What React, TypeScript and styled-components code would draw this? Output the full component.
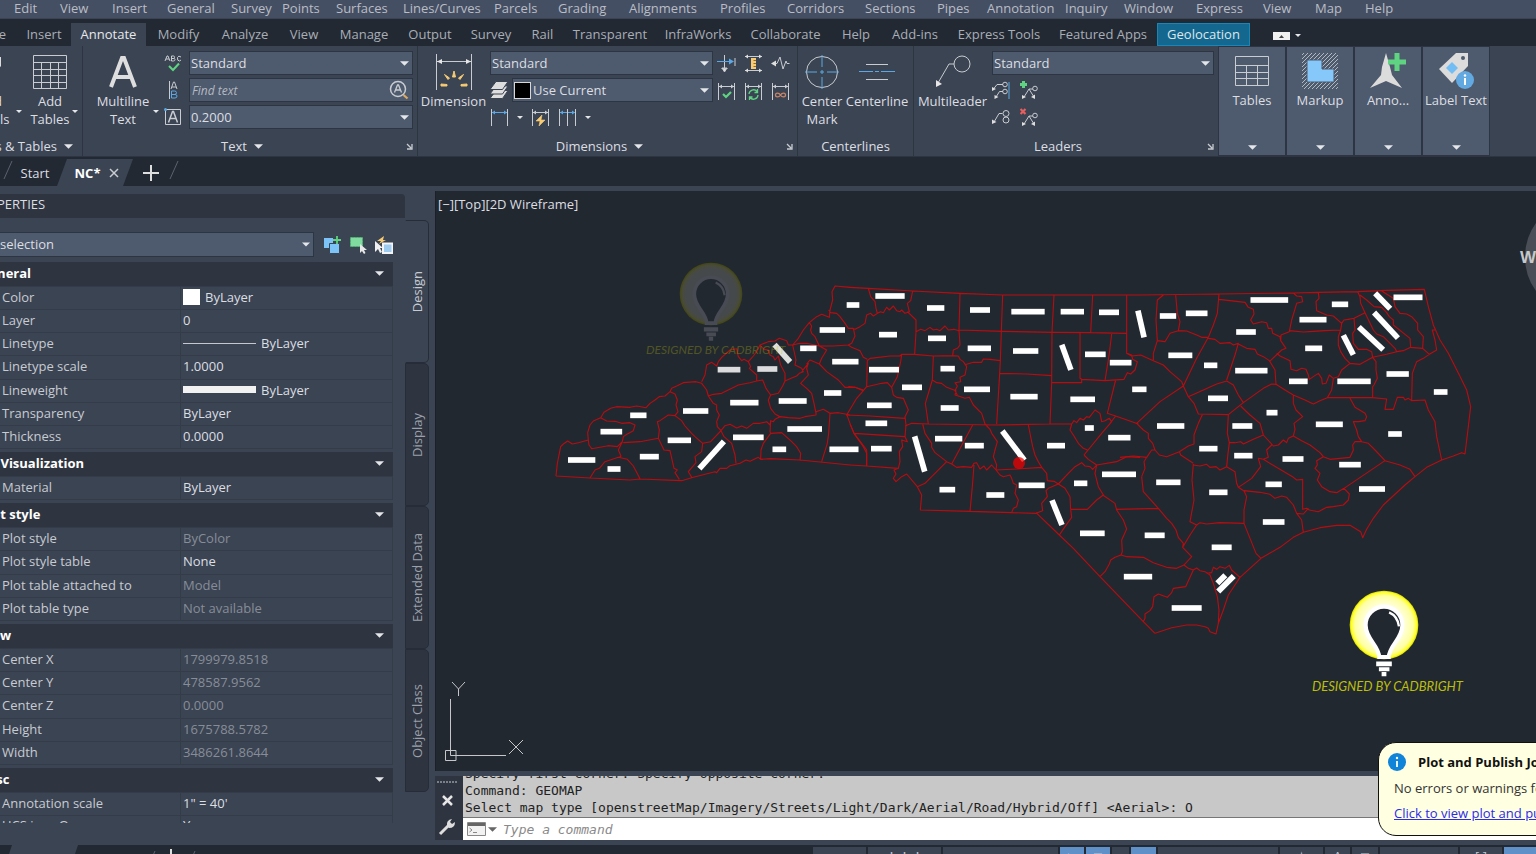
import React from 'react';
import styled, { createGlobalStyle, css } from 'styled-components';

const c = {
  menu: '#454f63',
  dark: '#222933',
  panel: '#3b4453',
  field: '#4e5a6d',
  head: '#2e3440',
  edge: '#2d3542',
  text: '#dcdee2',
  soft: '#b9bdc5',
  mute: '#878d98',
  blue: '#5aa9e6',
  green: '#5fd382',
  amber: '#f6cb73',
};

const GlobalStyle = createGlobalStyle`
  * { box-sizing: border-box; }
  body { margin: 0; background: ${c.dark}; }
  button, input, select { font: inherit; color: inherit; }
  svg { flex: none; }
`;

const Shell = styled.div`
  position: relative;
  display: flex;
  flex-direction: column;
  height: 100vh;
  overflow: hidden;
  background: ${c.panel};
  color: ${c.text};
  font: 13px/16px 'Open Sans', 'Noto Sans', sans-serif;
  white-space: nowrap;
`;

const plainButton = css`
  border: 0;
  padding: 0;
  background: none;
  cursor: default;
`;

/* ---------- menu bar and ribbon tabs ---------- */

const MenuBar = styled.nav`
  display: flex;
  flex: none;
  height: 19px;
  padding-left: 14px;
  background: ${c.menu};
  border-bottom: 1px solid ${c.panel};
  color: ${c.soft};
`;

const MenuItem = styled.button<{ $w: number }>`
  ${plainButton}
  flex: none;
  width: ${(p) => p.$w}px;
  height: 14px;
  text-align: left;
`;

const TabBar = styled.nav`
  display: flex;
  flex: none;
  align-items: flex-end;
  height: 27px;
  background: ${c.dark};
  color: #a9aeb6;
`;

const RibbonTab = styled.button<{ $w: number; $kind?: 'active' | 'context' | 'cut' }>`
  ${plainButton}
  display: flex;
  flex: none;
  align-items: center;
  justify-content: ${(p) => (p.$kind === 'cut' ? 'flex-end' : 'center')};
  width: ${(p) => p.$w}px;
  height: 23px;
  padding-bottom: 2px;
  ${(p) => p.$kind === 'cut' && 'padding-right: 11px; overflow: hidden;'}
  ${(p) => p.$kind === 'active' && `background: ${c.panel}; color: #e6e8eb;`}
  ${(p) => p.$kind === 'context' && 'background: #14688f; border: 1px solid #1a86b8; color: #dfe6ea;'}
`;

const RibbonToggle = styled.button`
  ${plainButton}
  display: flex;
  align-items: center;
  gap: 5px;
  height: 21px;
  margin-left: 23px;
`;

/* ---------- ribbon ---------- */

const Ribbon = styled.section`
  display: flex;
  flex: none;
  height: 111px;
  background: ${c.panel};
  border-bottom: 1px solid ${c.edge};
`;

const Panel = styled.div<{ $w: number }>`
  display: flex;
  flex: none;
  flex-direction: column;
  width: ${(p) => p.$w}px;
  padding: 5px 4px 0;
  overflow: hidden;
  border-right: 1px solid ${c.edge};
`;

const PanelBody = styled.div`
  display: flex;
  flex: 1;
`;

const PanelTitle = styled.div`
  display: flex;
  align-items: center;
  flex: none;
  height: 20px;
`;

const TitleText = styled.span`
  display: flex;
  flex: 1;
  align-items: center;
  justify-content: center;
  gap: 7px;
`;

const Launcher = styled.button`
  ${plainButton}
  display: flex;
  justify-content: flex-end;
  width: 16px;
`;

const BigButton = styled.button<{ $w: number }>`
  ${plainButton}
  display: flex;
  flex: none;
  flex-direction: column;
  align-items: center;
  width: ${(p) => p.$w}px;
  line-height: 18px;
`;

const BigIcon = styled.span`
  display: flex;
  align-items: center;
  justify-content: center;
  height: 41px;
`;

const DropHolder = styled.span`
  display: flex;
  flex: none;
  width: 6px;
  margin-left: -6px;
  padding-top: 58px;
`;

const Stack = styled.div<{ $gap?: number; $grow?: boolean }>`
  display: flex;
  flex-direction: column;
  gap: ${(p) => p.$gap ?? 3}px;
  ${(p) => p.$grow && 'flex: 1;'}
`;

const Row = styled.div<{ $gap?: number }>`
  display: flex;
  align-items: center;
  gap: ${(p) => p.$gap ?? 7}px;
  height: 24px;
`;

const IconButton = styled.button`
  ${plainButton}
  display: flex;
  flex: none;
`;

const FieldBox = styled.label<{ $side?: boolean }>`
  position: relative;
  display: flex;
  flex: 1;
  align-items: center;
  height: ${(p) => (p.$side ? 25 : 24)}px;
  background: ${c.field};
  border: 1px solid ${c.edge};
`;

const FieldSelect = styled.select`
  appearance: none;
  flex: 1;
  min-width: 0;
  height: 100%;
  padding: 0 20px 0 1px;
  border: 0;
  outline: 0;
  background: transparent;
`;

const FieldInput = styled.input`
  flex: 1;
  min-width: 0;
  height: 100%;
  padding: 0 2px;
  border: 0;
  outline: 0;
  background: transparent;
  &::placeholder { color: #b4b9c2; font-size: 12px; font-style: italic; opacity: 1; }
`;

const FieldMark = styled.span`
  position: absolute;
  right: 3px;
  display: flex;
  pointer-events: none;
`;

const Swatch = styled.span<{ $color: string }>`
  flex: none;
  width: 17px;
  height: 17px;
  margin: 0 1px;
  background: ${(p) => p.$color};
  border: 1px solid #d8d8d8;
`;

const Collapsed = styled.button`
  ${plainButton}
  display: flex;
  flex: none;
  flex-direction: column;
  align-items: center;
  width: 66px;
  height: 108px;
  margin: 1px 2px 0 0;
  padding: 3px 0 5px;
  background: ${c.field};
  outline: 1px solid ${c.edge};
  line-height: 18px;
`;

const Spring = styled.span`
  flex: 1;
`;

/* ---------- file tabs ---------- */

const FileTabs = styled.nav`
  display: flex;
  flex: none;
  align-items: stretch;
  height: 34px;
  padding: 2px 0 0 3px;
  background: ${c.dark};
  border-bottom: 5px solid ${c.panel};
`;

const FileTab = styled.button<{ $active?: boolean }>`
  ${plainButton}
  display: flex;
  align-items: center;
  justify-content: center;
  gap: 9px;
  width: ${(p) => (p.$active ? 76 : 44)}px;
  ${(p) =>
    p.$active &&
    `background: ${c.panel}; color: #fff; font-weight: 700; padding-left: 4px;
     clip-path: polygon(10px 0, 100% 0, 66px 100%, 0 100%);`}
`;

const NewTab = styled.button`
  ${plainButton}
  display: flex;
  align-items: center;
  margin: 0 10px;
`;

/* ---------- properties palette ---------- */

const Main = styled.main`
  display: flex;
  flex: 1;
  min-height: 0;
`;

const Palette = styled.aside`
  display: flex;
  flex: none;
  width: 471px;
  margin-left: -36px;
`;

const PaletteBody = styled.div`
  display: flex;
  flex: none;
  flex-direction: column;
  width: 441px;
`;

const PaletteTitle = styled.h2`
  flex: none;
  height: 24px;
  margin: 3px 0 0;
  padding-left: 7px;
  background: ${c.head};
  border-radius: 0 4px 0 0;
  font-size: 13px;
  font-weight: 400;
  line-height: 20px;
`;

const SelectionRow = styled.div`
  display: flex;
  flex: none;
  align-items: center;
  gap: 8px;
  height: 25px;
  margin: 14px 12px 5px 0;
`;

const SelectionField = styled(FieldBox)`
  flex: none;
  width: 350px;
  margin-right: 1px;
  padding: 0 0 1px 13px;
`;

const Sections = styled.div`
  height: 561px;
  margin-right: 12px;
  overflow: hidden;
`;

const Section = styled.section`
  margin-bottom: 3px;
`;

const SectionHead = styled.h3`
  display: flex;
  align-items: center;
  justify-content: space-between;
  height: 24px;
  margin: 0;
  padding: 0 9px 2px 16px;
  background: ${c.head};
  color: #fff;
  font-size: 13px;
  font-weight: 700;
`;

const PropTable = styled.table<{ $h: number }>`
  width: 100%;
  height: ${(p) => p.$h}px;
  border-collapse: collapse;
  table-layout: fixed;
`;

const PropName = styled.th`
  width: 216px;
  padding: 0 0 2px 37px;
  border: 1px solid #343c4a;
  color: #c8cbd1;
  font-weight: 400;
  text-align: left;
`;

const PropValue = styled.td<{ $mute?: boolean }>`
  padding: 0 0 2px 2px;
  border: 1px solid #343c4a;
  color: ${(p) => (p.$mute ? c.mute : c.text)};
`;

const ValueFlex = styled.span`
  display: flex;
  align-items: center;
  gap: 5px;
`;

const ColorBox = styled.span`
  width: 17px;
  height: 16px;
  background: #fff;
`;

const LineSample = styled.span<{ $weight: number }>`
  width: 73px;
  height: ${(p) => p.$weight}px;
  background: ${(p) => (p.$weight > 2 ? '#f2f2f2' : '#c5c8cd')};
`;

const SideTabs = styled.div`
  display: flex;
  flex: none;
  flex-direction: column;
  width: 24px;
  margin-top: 29px;
`;

const SideTab = styled.button<{ $active?: boolean }>`
  ${plainButton}
  display: flex;
  flex: none;
  align-items: center;
  justify-content: center;
  height: 143px;
  background: ${(p) => (p.$active ? c.panel : c.head)};
  border: 1px solid #272d38;
  border-left-color: ${(p) => (p.$active ? c.panel : '#272d38')};
  border-radius: 0 5px 5px 0;
  color: ${(p) => (p.$active ? '#c6cad1' : '#9ba0aa')};
`;

const Upright = styled.span`
  writing-mode: vertical-rl;
  transform: rotate(180deg);
`;

/* ---------- drawing area and command line ---------- */

const Work = styled.div`
  display: flex;
  flex: 1;
  flex-direction: column;
  min-width: 0;
`;

const Canvas = styled.div`
  position: relative;
  flex: 1;
  min-height: 0;
  overflow: hidden;
  background: #222830;
  border-left: 1px solid #1c2128;
`;

const Drawing = styled.svg`
  display: block;
  width: 100%;
  height: 100%;
`;

const ViewLabel = styled.div`
  position: absolute;
  top: 5px;
  left: 2px;
`;

const CommandLine = styled.section`
  display: flex;
  flex: none;
  height: 64px;
  margin: 5px 0;
  font: 13px/17px 'DejaVu Sans Mono', monospace;
`;

const Gutter = styled.div`
  display: flex;
  flex: none;
  flex-direction: column;
  align-items: center;
  justify-content: space-between;
  width: 28px;
  padding: 5px 4px 4px 0;
  background: ${c.head};
`;

const CommandBody = styled.div`
  display: flex;
  flex: 1;
  flex-direction: column;
  min-width: 0;
`;

const History = styled.div`
  display: flex;
  flex-direction: column;
  justify-content: flex-end;
  height: 42px;
  padding: 0 2px 1px;
  overflow: hidden;
  background: #c8c8c8;
  border-bottom: 1px solid #777;
  color: #222;
`;

const Prompt = styled.label`
  display: flex;
  flex: 1;
  align-items: center;
  gap: 2px;
  padding: 0 4px;
  background: #fff;
`;

const PromptInput = styled.input`
  flex: 1;
  min-width: 0;
  padding: 0 4px;
  border: 0;
  outline: 0;
  background: transparent;
  color: #333;
  &::placeholder { color: #8a8a8a; font-style: italic; opacity: 1; }
`;

/* ---------- status bar ---------- */

const StatusBar = styled.footer`
  display: flex;
  flex: none;
  justify-content: space-between;
  height: 9px;
  overflow: hidden;
  background: ${c.dark};
`;

const LayoutTabs = styled.div`
  display: flex;
`;

const LayoutMarks = styled.div`
  display: flex;
  align-items: flex-start;
  gap: 7px;
  padding-top: 4px;
`;

const ModelTab = styled.span`
  width: 78px;
  height: 9px;
  margin-right: 68px;
  background: ${c.panel};
  clip-path: polygon(12px 0, 100% 0, 75px 100%, 9px 100%);
`;

const StatusGroup = styled.div`
  display: flex;
  gap: 2px;
  padding-top: 2px;
`;

const StatusCell = styled.button<{ $w: number; $on?: boolean }>`
  ${plainButton}
  flex: none;
  width: ${(p) => p.$w}px;
  height: 17px;
  background: ${(p) => (p.$on ? '#6090c8' : c.panel)};
  color: #c3c7ce;
`;

/* ---------- notification ---------- */

const Balloon = styled.div`
  position: absolute;
  right: -124px;
  bottom: 18px;
  display: flex;
  flex-direction: column;
  gap: 9px;
  width: 282px;
  height: 94px;
  padding: 10px 15px;
  background: #ffffe1;
  border: 1px solid #111;
  border-radius: 18px;
  color: #333;
`;

const BalloonTitle = styled.strong`
  display: flex;
  align-items: center;
  gap: 12px;
  height: 18px;
  margin-left: -6px;
  color: #111;
`;

const BalloonLink = styled.a`
  color: #2a2af0;
`;

/* ---------- icons ---------- */

const Caret = ({ s = 9, color = '#e4e6e9' }: { s?: number; color?: string }) => (
  <svg width={s} height={5} viewBox="0 0 10 5" aria-hidden="true">
    <path d="M0 0H10L5 5Z" fill={color} />
  </svg>
);

const Slash = () => (
  <svg width="10" height="22" viewBox="0 0 10 22" aria-hidden="true">
    <path d="M9 2L1 20" stroke="#5b6371" fill="none" />
  </svg>
);

type SvgProps = { w: number; h: number; children: React.ReactNode };
const Ico = ({ w, h, children }: SvgProps) => (
  <svg width={w} height={h} viewBox={`0 0 ${w} ${h}`} fill="none" stroke="#c9ccd1" aria-hidden="true">
    {children}
  </svg>
);

const DimFrame = ({ accent = '#c9ccd1' }: { accent?: string }) => (
  <>
    <path d="M1.500 1V18M17.500 1V18" />
    <path d="M2 4.500H17" stroke={accent} />
    <path d="M2 4.500L5 2.500V6.500ZM17 4.500L14 2.500V6.500Z" fill={accent} stroke="none" />
  </>
);

const icons = {
  tag: (
    <Ico w={24} h={36}>
      <path d="M2 3H23V12L10 28L2 20Z" fill="#dcdcdc" stroke="none" />
      <circle cx="18" cy="7" r="2" fill={c.panel} stroke="none" />
    </Ico>
  ),
  grid: (
    <Ico w={36} h={36}>
      <path d="M1.500 1.500H34.500V34.500H1.500ZM1.500 8.500H34.500M1.500 15.500H34.500M1.500 21.500H34.500M1.500 28.500H34.500M9.500 8.500V34.500M18.500 8.500V34.500M26.500 8.500V34.500" />
    </Ico>
  ),
  bigA: (
    <Ico w={30} h={34}>
      <path d="M3 32L14 3H16L27 32M7 22H23" stroke="#dedede" strokeWidth="4" />
    </Ico>
  ),
  spell: (
    <Ico w={18} h={18}>
      <path d="M1 7L3 2H4L6 7M2 5H5M7.500 2V7H9.500Q11 7 11 5.500Q11 4.500 9.500 4.500H7.500H9.500Q10.500 4.500 10.500 3.300Q10.500 2 9.500 2ZM17 3Q14.500 1 13.500 3.500Q13 7 15.500 7L17 6" />
      <path d="M5 12L9 16L15 9.500" stroke={c.green} strokeWidth="2" />
    </Ico>
  ),
  align: (
    <Ico w={18} h={18}>
      <path d="M5.500 0V18" />
      <path d="M7 8L9.500 1H10.500L13 8M8 6H12" />
      <path d="M7.500 10V17H11Q13 17 13 15Q13 13.500 11 13.500H7.500H10.500Q12.500 13.500 12.500 11.700Q12.500 10 10.500 10Z" stroke={c.blue} />
    </Ico>
  ),
  boxA: (
    <Ico w={18} h={18}>
      <path d="M1.500 1.500H16.500V16.500H1.500Z" />
      <path d="M4.500 14.500L8.500 3.500H9.500L13.500 14.500M6 10.500H12" strokeWidth="1.500" />
      <circle cx="1.500" cy="1.500" r="1.500" fill={c.blue} stroke="none" />
    </Ico>
  ),
  findA: (
    <Ico w={20} h={20}>
      <circle cx="9" cy="9" r="7.500" strokeWidth="1.500" />
      <path d="M5.500 12.500L8.500 5H9.500L12.500 12.500M7 10H11" strokeWidth="1.300" />
      <path d="M14.500 15L18.500 18.500" stroke="#e0a960" strokeWidth="2.200" />
    </Ico>
  ),
  dimension: (
    <Ico w={38} h={38}>
      <path d="M1.500 1V37M36.500 1V37M2 8.500H36" />
      <path d="M2 8.500L7 6V11ZM36 8.500L31 6V11Z" fill="#e6e6e6" stroke="none" />
      <path d="M17.500 24L19 18L20.500 24ZM13 26.500L9.500 21.500L14.500 25ZM25 26.500L28.500 21.500L23.500 25ZM12 31.500L6 31V33H12ZM26 31.500L32 31V33H26Z" fill={c.amber} stroke={c.amber} />
    </Ico>
  ),
  layers: (
    <Ico w={18} h={18}>
      <path d="M6 9.500H18L12.500 17.500H0Z" fill="#dedede" stroke={c.panel} />
      <path d="M6 5H18L12.500 13H0Z" fill="#dedede" stroke={c.panel} />
      <path d="M6 .5H18L12.500 8.500H0Z" fill="#dedede" stroke={c.panel} />
    </Ico>
  ),
  dimLinear: <Ico w={19} h={19}><DimFrame accent={c.blue} /></Ico>,
  dimQuick: (
    <Ico w={19} h={19}>
      <DimFrame />
      <path d="M11 7L5 13H9L8 18L14 12H10Z" fill={c.amber} stroke={c.amber} strokeWidth="0.600" />
    </Ico>
  ),
  dimContinue: (
    <Ico w={19} h={19}>
      <DimFrame accent={c.blue} />
      <path d="M9.500 1V18" />
    </Ico>
  ),
  dimBreak: (
    <Ico w={19} h={19}>
      <path d="M7.500 1V14M18 4V12" />
      <path d="M0 7.500H14" stroke={c.blue} />
      <path d="M17 7.500L12 4.500V10.500Z" fill={c.blue} stroke="none" />
      <path d="M4.500 14.500H10.500M7.500 18L5 14H10Z" fill="#dedede" />
    </Ico>
  ),
  dimSpace: (
    <Ico w={19} h={19}>
      <path d="M1 2.500H18M1 16.500H18" />
      <path d="M1 2.500L4 .5V4.500ZM18 2.500L15 .5V4.500ZM1 16.500L4 14.500V18.500ZM18 16.500L15 14.500V18.500Z" fill="#dedede" stroke="none" />
      <path d="M7 4H12V15H7Z" fill={c.amber} stroke="none" />
      <path d="M9.500 6.500H12M9.500 9.500H12M9.500 12.500H12" stroke="#8a6a30" />
    </Ico>
  ),
  dimJog: (
    <Ico w={19} h={19}>
      <path d="M4 9.500H6L9 3L12 15L15 7L16 9.500H18.500" />
      <path d="M0 9.500L5 6.500V12.500Z" fill="#dedede" stroke="none" />
    </Ico>
  ),
  dimCheck: (
    <Ico w={19} h={19}>
      <DimFrame />
      <path d="M6 12L9 15L14 10" stroke={c.green} strokeWidth="2.200" />
    </Ico>
  ),
  dimUpdate: (
    <Ico w={19} h={19}>
      <DimFrame />
      <path d="M5 12A4.500 4.500 0 0 1 13 9.500M14 13A4.500 4.500 0 0 1 6 15.500M13.500 7V10.500H10.500M5.500 18V15H8.500" stroke={c.green} strokeWidth="1.300" />
    </Ico>
  ),
  dimLink: (
    <Ico w={19} h={19}>
      <DimFrame />
      <path d="M9.500 13C8 10.500 4.500 10.500 4.500 13S8 15.500 9.500 13S14.500 10.500 14.500 13S11 15.500 9.500 13" stroke="#c98465" strokeWidth="1.300" />
    </Ico>
  ),
  centerMark: (
    <Ico w={36} h={36}>
      <circle cx="18" cy="18" r="15.500" />
      <path d="M1 18H13M23 18H35M18 1V13M18 23V35M16 18H20M18 16V20" stroke={c.blue} />
    </Ico>
  ),
  centerLine: (
    <Ico w={36} h={36}>
      <path d="M7 10.500H29M7 25.500H29" />
      <path d="M0 17.500H14M16 17.500H20M22 17.500H36" stroke={c.blue} />
    </Ico>
  ),
  multileader: (
    <Ico w={38} h={36}>
      <circle cx="28" cy="10" r="8" />
      <path d="M20 10H15L4 29" />
      <path d="M2 33V26L8 30Z" fill="#e6e6e6" stroke="none" />
    </Ico>
  ),
  leadAlign: (
    <Ico w={18} h={18}>
      <path d="M1.500 8L5 3.500H11M4 16L7.500 10.500H11" />
      <circle cx="13" cy="3.500" r="2.300" />
      <circle cx="13" cy="10.500" r="2.300" />
      <path d="M17 1V18" stroke={c.blue} />
      <path d="M0 10V6L4 8ZM2.500 18V14L6.500 16Z" fill="#dedede" stroke="none" />
    </Ico>
  ),
  leadAdd: (
    <Ico w={18} h={18}>
      <path d="M4 16L9 8H13M9 8L14 16" />
      <circle cx="15" cy="7.500" r="2.300" />
      <path d="M2 18V14L6 16ZM15 18V13.500L11 16Z" fill="#dedede" stroke="none" />
      <path d="M3.500 0V7M0 3.500H7" stroke={c.green} strokeWidth="3" />
    </Ico>
  ),
  leadCollect: (
    <Ico w={18} h={18}>
      <path d="M2 14L7 5.500H10.500" />
      <circle cx="14" cy="5.500" r="3" />
      <circle cx="14" cy="12" r="3" />
      <path d="M0 16V11.500L4.500 14Z" fill="#dedede" stroke="none" />
    </Ico>
  ),
  leadRemove: (
    <Ico w={18} h={18}>
      <path d="M4 16L9 8H13M9 8L14 16" />
      <circle cx="15" cy="7.500" r="2.300" />
      <path d="M2 18V14L6 16ZM15 18V13.500L11 16Z" fill="#dedede" stroke="none" />
      <path d="M.5 1L5.500 6M5.500 1L.5 6" stroke="#e85d5d" strokeWidth="2.200" />
    </Ico>
  ),
  tables: (
    <Ico w={36} h={32}>
      <path d="M1.500 1.500H34.500V30.500H1.500ZM1.500 10.500H34.500M1.500 17.500H34.500M1.500 23.500H34.500M12.500 10.500V30.500M23.500 10.500V30.500" />
    </Ico>
  ),
  markup: (
    <Ico w={38} h={38}>
      <defs>
        <pattern id="hatch" width="4" height="4" patternUnits="userSpaceOnUse">
          <path d="M-1 5L5 -1M-1 1L1 -1M3 5L5 3" stroke="#b4b9c0" />
        </pattern>
      </defs>
      <path d="M1 1H37V37H1Z" fill="url(#hatch)" stroke="none" />
      <path d="M6 8H21V17H33V30H6Z" fill="#86c8fa" stroke={c.field} />
    </Ico>
  ),
  anno: (
    <Ico w={38} h={38}>
      <path d="M17 1L21 15L23 23L33 36L17 29L1 36L12 23L13 15Z" fill="#dcdcdc" stroke="none" />
      <path d="M28 1V19M19 10H37" stroke={c.green} strokeWidth="5" />
    </Ico>
  ),
  labelText: (
    <Ico w={38} h={38}>
      <path d="M2 17L19 1H31V14L15 31Z" fill="#dcdcdc" stroke="none" />
      <path d="M15 10L21 16L15 22L9 16Z" fill="#73bdf5" stroke="none" />
      <circle cx="26" cy="6" r="2" fill={c.field} stroke="none" />
      <circle cx="28" cy="28" r="9" fill="#62a9e2" stroke="none" />
      <path d="M28 26V33" stroke="#fff" strokeWidth="2" />
      <circle cx="28" cy="23.500" r="1.200" fill="#fff" stroke="none" />
    </Ico>
  ),
  launcher: (
    <Ico w={7} h={7}>
      <path d="M1 1L5 5M6 1V6H1" strokeWidth="1.300" />
    </Ico>
  ),
  minimize: (
    <Ico w={17} h={8}>
      <path d="M0 0H17V8H0Z" fill="#f0f0f0" stroke="none" />
      <path d="M6 6L8.500 3L11 6Z" fill="#444" stroke="none" />
    </Ico>
  ),
  pickAdd: (
    <Ico w={18} h={18}>
      <path d="M1 2H10V12H1Z" fill="#7cc4f8" stroke="none" />
      <path d="M6.500 7.500H16.500V17.500H6.500Z" fill="#7cc4f8" stroke={c.panel} />
      <path d="M14 0V8M10 4H18" stroke={c.green} strokeWidth="1.800" />
    </Ico>
  ),
  pickSelect: (
    <Ico w={18} h={18}>
      <path d="M1.500 1.500H13.500V10.500H1.500Z" fill="#7fdba0" stroke="#52b877" strokeDasharray="2 1" />
      <path d="M11 8V17L13 15L15 18L16.500 17L15 14H18Z" fill="#e8e8e8" stroke="none" />
    </Ico>
  ),
  pickQuick: (
    <Ico w={18} h={18}>
      <path d="M9 0L2 5H6L4 8L11 4H8Z" fill={c.amber} stroke="none" />
      <path d="M0 5V16L3 13L5 17L7 16L5 12H8Z" fill="#f0f0f0" stroke="none" />
      <path d="M8 7.500H17.500V17H8Z" fill="#9ecbf0" stroke="#f4f4f4" strokeWidth="2" />
    </Ico>
  ),
  close: (
    <Ico w={11} h={11}>
      <path d="M1 1L10 10M10 1L1 10" stroke="#e6e6e6" strokeWidth="2.500" />
    </Ico>
  ),
  tabClose: (
    <Ico w={10} h={10}>
      <path d="M1 1L9 9M9 1L1 9" strokeWidth="1.500" />
    </Ico>
  ),
  plus: (
    <Ico w={16} h={16}>
      <path d="M8 0V16M0 8H16" stroke="#dedede" strokeWidth="2" />
    </Ico>
  ),
  dots: (
    <Ico w={20} h={2}>
      <path d="M0 1H20" strokeDasharray="2 1" />
    </Ico>
  ),
  wrench: (
    <Ico w={18} h={18}>
      <path d="M2 16L10 8" stroke="#dedede" strokeWidth="3" />
      <path d="M9 8Q8 2 14 1L12 4L14 6L17 4Q17 10 11 10Z" fill="#dedede" stroke="none" />
    </Ico>
  ),
  prompt: (
    <Ico w={19} h={14}>
      <path d="M.5 .5H18.500V13.500H.5Z" fill="#f2f2f2" stroke="#888" />
      <path d="M1 2.500H18" stroke="#666" strokeWidth="3" />
      <path d="M2.500 6L5 8L2.500 10M6 10.500H10" stroke="#888" />
    </Ico>
  ),
  info: (
    <Ico w={18} h={18}>
      <circle cx="9" cy="9" r="9" fill="#0f84d8" stroke="none" />
      <path d="M9 8V14" stroke="#fff" strokeWidth="1.800" />
      <circle cx="9" cy="5" r="1.200" fill="#fff" stroke="none" />
    </Ico>
  ),
};

const Tool = ({ name, label }: { name: keyof typeof icons; label: string }) => (
  <IconButton aria-label={label}>{icons[name]}</IconButton>
);

const Combo = ({ label, value, swatch }: { label: string; value: string; swatch?: string }) => (
  <FieldBox>
    {swatch && <Swatch $color={swatch} />}
    <FieldSelect aria-label={label} defaultValue={value}>
      <option>{value}</option>
    </FieldSelect>
    <FieldMark><Caret /></FieldMark>
  </FieldBox>
);

/* ---------- county map ---------- */

// Each sheet is digitised on its own grid of three units per drawing unit.
// A bar is centre x, centre y, length, angle and fill.
type Bar = [number, number, number, number?, string?];
type Sheet = { at: [number, number]; lines: string; bars: Bar[] };

const sheets: Sheet[] = [
  {
    at: [540, 250],
    lines: `M48 678L52 640L62 590L70 582L83 573L97 582L115 578L145 570L143 548L150 525L160 513L182 503L200 513L225 514L245 520L270 518L285 525L280 542L262 552L250 560L247 575L232 590L205 587L155 596L147 585L145 570
    M182 503L192 487L212 475L230 470L270 472L290 468L318 473L330 460L345 450L358 440L375 438L390 425L405 432L412 450L408 465L414 485L405 497L385 495L360 512L352 515L358 540L355 565L300 575L250 578
    M48 678L150 684L270 690L300 687L425 692M150 684L165 660L178 655L195 635L235 622L262 628L280 648L300 686M247 575L235 600L243 618L238 622
    M355 565L372 600L390 602L402 655L412 660L405 668L418 688M405 497L425 512L435 528L455 550L465 560L488 580L485 605L465 620L468 638L445 665L455 682
    M425 692L460 682L525 665L530 668L540 655L560 655L570 647L600 640L618 630L630 634L655 622L662 628L690 626L780 630L930 645
    M488 580L512 575L543 542M390 425L395 415L410 408L430 398L468 395L485 400L500 420L505 438L520 460L530 465L530 480L538 495L530 515L532 530L543 542L552 560L575 580L585 615L588 640
    M485 395L495 375L500 345L515 337L530 348L535 335L545 322L570 300L590 296L595 320L605 332L612 328L625 335L640 318L650 305L660 285L685 275L705 273L718 265L740 272L745 285L758 285L775 265L790 240L808 218
    M505 438L520 433L545 430L595 405L630 398L650 393L668 390L678 415L692 435L715 430L728 408L735 393M625 335L632 350L628 355L650 375L650 393
    M660 285L672 298L685 300L690 315L700 320L705 330L715 318L722 345L735 370L735 393L755 384L770 378L778 370L790 365L785 355L765 345L768 330L758 285L780 280L800 280L838 288
    M692 435L685 450L692 475L705 492L720 500L705 508L700 515L692 512L690 525L680 515L660 520L640 520L620 535L605 528L590 534L570 523L555 527L543 542
    M720 500L745 503L780 505L795 500L828 495L828 485L850 478L870 490L895 488L920 493L930 495
    M785 365L805 340L800 355L805 375L782 400L800 415L815 430L822 460L828 490M800 342L810 330L838 342L845 325L860 300L838 288L825 260L815 250L812 240L815 228L808 218L830 200L845 193L868 202L870 180L878 150L876 125L885 108L930 112
    M866 180L872 188L890 190L900 200L915 220L925 235L940 235L945 258L935 280L925 285L880 288L838 288M838 342L860 365L895 390L915 412L945 412L970 420
    M870 490L866 550L862 580L845 635M920 493L930 520L942 550L965 580L980 600L980 648M692 515L690 545L692 550L670 580L663 600L662 628M692 550L725 548L755 575L770 590L782 610L780 632`,
    bars: [[125, 630, 82], [222, 657, 39], [328, 620, 57], [214, 545, 65], [295, 496, 49], [418, 571, 70], [515, 615, 110, -48], [625, 562, 92], [467, 483, 76], [613, 458, 85], [567, 359, 68, 0, '#dcdcde'], [682, 357, 60, 0, '#dcdcde'], [727, 310, 70, 48, '#dededc'], [805, 295, 49], [939, 165, 38], [877, 240, 76], [916, 335, 79], [878, 429, 52], [758, 453, 84], [794, 537, 104], [718, 598, 41], [912, 598, 87]],
  },
  {
    at: [850, 270],
    lines: `M0 52L55 55L188 63L330 70L458 75L612 75L728 75L870 75M55 55L62 80L75 95L78 115L82 130L70 138L62 130L50 135L45 160L30 170L15 178L5 175
    M82 130L92 125L100 128L110 112L118 120L130 108L140 122L150 125L155 120L165 130L178 125L172 100L182 92L188 63M172 125L198 150L198 185L194 253
    M198 185L212 178L225 182L240 172L250 180L260 178L270 182L285 168L295 180L312 178L327 182M330 70L327 180L458 184L612 187L722 188L728 75M612 75L606 187L605 338M722 188L830 190M458 75L454 184L451 272L449 310L440 462
    M327 180L330 225L322 235L310 240L308 257L250 258L194 253L155 253L150 258L120 258L60 265L52 272L50 350L40 362L15 352L-5 350M-5 225L5 232L30 242L40 262L52 268
    M155 253L152 275L142 320L125 352L112 338L95 340L50 350M112 338L125 352L130 375L140 382L160 385L175 420L165 440L168 465L165 500L172 515L155 510L158 530L148 545L150 575L145 595L50 588L0 585M50 588L50 550L40 530L12 490L0 462
    M40 362L20 385L-10 435L60 438L165 445M12 490L165 500M250 258L247 330L238 360L226 400L235 462M247 330L260 338L275 340L290 352L318 362L315 375L325 378L345 385L358 382L370 405L395 430L405 462
    M308 257L325 258L330 268L340 275L350 290L345 315L330 322L332 335L315 338L322 348L315 362L322 375M345 284L370 277L395 277L400 267L420 268L451 272M449 310L530 312L605 317
    M605 338L695 338L695 328L690 325L690 190M695 328L765 332L822 328L832 308L842 312L855 300L862 275L848 268L845 255L830 250L830 75M785 192L778 250L765 332M605 338L600 462
    M165 468L185 460L235 462L440 465L600 462L665 462L672 452L680 458L690 445L700 450L710 440L718 442L735 420L750 430L755 455L765 452L778 445L785 455L755 490L702 555M665 462L660 480L670 495L685 520L700 535L712 540M797 330L772 430L797 438L865 462M797 438L780 460
    M218 462L225 490L245 520L245 532L255 548L290 575L305 582L368 465M305 582L320 592L340 590L365 592L372 580L380 578L390 597L402 588L410 600L425 585L438 600L440 585L430 560L435 540L442 515L425 490L420 478L405 462
    M438 600L500 597L575 592L590 610L592 632L612 634L625 642M535 465L548 530L555 555L565 575L575 592M290 575L225 640L202 650L170 612L155 620L138 635L130 625L138 612L132 600L145 595
    M202 650L215 675L211 720L360 724L485 728L558 730L578 722L575 700L592 680L588 662L595 655L625 642L645 655L660 680L662 718
    M372 585L367 650L360 724M438 600L450 615L460 620L480 615L485 625L490 640L500 645L495 670L505 690L500 710L490 715L485 728
    M625 642L655 610L675 590L695 578L705 588L720 590L728 598L740 585L735 610L745 650L760 675L740 690L712 718L662 718M702 555L715 568L740 585L800 575L830 560L870 562`,
    bars: [[120, 78, 88], [257, 114, 52], [390, 120, 60], [534, 125, 100], [667, 125, 70], [777, 127, 60], [114, 194, 54], [261, 205, 54], [388, 235, 70], [527, 243, 76], [649, 262, 80, 70], [736, 253, 62], [812, 278, 65], [102, 299, 90], [293, 296, 43], [186, 352, 60], [381, 358, 78], [522, 380, 82], [698, 388, 74], [88, 406, 74], [299, 414, 54], [79, 460, 65], [718, 474, 27], [296, 506, 82], [373, 527, 57], [490, 527, 110, 53], [618, 527, 54], [808, 503, 67], [94, 536, 62], [209, 552, 110, 74], [807, 613, 102], [692, 640, 40], [545, 646, 78], [292, 659, 47], [436, 675, 54], [621, 728, 80, 68]],
  },
  {
    at: [1120, 270],
    lines: `M60 75L297 72L520 69L595 67L713 65L800 61L913 58L925 110L940 165L960 210L985 250L1018 315L1040 360L1052 410L1045 470L1035 552L1025 548L1000 558L965 570L920 592L885 620L855 645L790 705L760 745L740 778L728 803L722 785L690 766L650 766L600 773L550 787
    M20 250L35 258L62 255L100 272L130 285L150 305L185 335L190 348M130 75L112 90L108 150L112 212L135 215L150 190L175 182L180 155L172 130L167 75M112 212L100 250L100 270M175 182L200 183L230 195L245 202L265 202
    M297 72L292 130L280 165L265 202L230 265L190 348L205 380M297 88L330 92L375 97L385 112L400 118L402 132L392 150L400 162L425 155L440 158L445 175L455 175L458 190L480 200L482 212L498 235L485 240L448 275
    M482 212L483 195L508 185L515 150L530 100L548 95L545 80L530 78L520 69M265 205L285 208L300 220L330 218L340 225L355 220L345 255L320 330M355 222L380 235L405 238L412 252L430 260L448 272L465 300L468 343L455 342L430 355L370 398L355 375L340 345L320 333L290 342L205 380L222 400L235 432L325 434L370 398
    M508 182L550 186L580 184L615 182L662 180L665 160L640 138L620 135L590 122L588 95L597 85L595 67M470 250L480 258L510 272L513 298L530 302L545 295L558 298L565 315L568 328L580 320L595 310L605 325L607 342L618 340L628 315L640 325L635 360L622 383L600 392L580 402L555 390L520 375L495 360L468 343
    M662 180L655 200L655 225L662 245L675 265L690 280L720 283L758 262M690 280L665 300L655 320L640 325M665 160L672 150L685 148L702 145L735 128L722 100L720 80L713 65M720 75L740 90L762 110L785 112L800 128L808 140L820 150L820 165L870 205L872 232L850 242L830 245L800 253L758 262
    M702 145L705 180L698 190L700 220L715 238L740 238L755 245L758 262L768 275L768 300L772 325L762 345L758 350L758 383L622 383M735 128L760 180L770 192L790 200L805 215L825 235L830 245
    M785 63L820 85L825 110L840 130L860 132L875 140L893 160L893 180L910 200L908 235L928 253L950 240L945 210L937 180L945 180M872 232L908 235M928 253L910 265L890 275L877 310L875 392L915 390L925 420L945 455L950 500L965 570
    M758 383L800 387L795 418L820 418L832 382L850 382L855 390L865 385L875 392M690 385L705 412L735 430L740 440L735 452L715 455L700 455L710 480L715 500L725 515L745 520L765 540L795 572L840 585L870 598L885 620
    M520 375L520 400L528 420L548 440L522 460L525 478L520 498L505 505L500 518L490 510L475 525L460 528L430 495L420 460L390 435L362 408M520 498L545 512L570 525L600 548L610 560L630 568L690 562L700 540L698 525L705 515L725 515
    M610 560L590 572L592 585L585 595L600 610L592 630L605 650L630 665L650 668L672 655L795 572M672 655L688 672L685 690L670 705L640 710L620 712L595 725L568 720L560 715L548 718L548 628L530 630L520 622L430 568L445 562L440 540L455 525
    M430 568L415 565L422 590L395 625L355 652M430 495L400 508L370 522L362 515L345 518L328 518L322 490L325 434M328 518L324 550L320 590L345 605L350 640L355 652L372 663M220 585L240 588L260 583L270 592L288 590L300 600L320 590
    M247 434L235 460L222 495L222 522L205 528L178 545L140 560L118 555L105 540L95 540L80 562L72 575L75 595L65 620M178 545L182 555L220 580M105 540L98 520L85 505L85 490L70 480L50 460L120 395L190 348M80 562L40 558L0 562`,
    bars: [[63, 162, 82, 77], [144, 138, 49], [230, 130, 65], [448, 90, 113], [378, 186, 59], [579, 149, 81], [660, 103, 49], [788, 93, 65, 46], [798, 166, 105, 47], [864, 82, 87], [753, 205, 100, 43], [685, 225, 66, 63], [581, 235, 51], [181, 256, 72], [272, 286, 40], [394, 302, 97], [535, 334, 56], [702, 334, 100], [833, 312, 67], [962, 366, 41], [58, 358, 43], [294, 385, 60], [456, 428, 33], [152, 468, 82], [367, 468, 60], [628, 463, 81], [825, 492, 41], [265, 536, 55], [370, 557, 55], [519, 567, 63], [690, 584, 65], [145, 637, 73], [295, 667, 55], [461, 643, 49], [756, 657, 78], [461, 756, 65]],
  },
  {
    at: [1020, 460],
    lines: `M48 158L118 225L160 265L240 350L370 485L405 520M118 225L135 200L155 172L152 148M248 105L285 130L290 150L310 180L320 207L305 240L307 275L303 285L285 292L272 300L268 312L255 335L240 350
    M290 148L415 145M303 285L320 290L370 292L400 308L440 322L470 325L492 315L515 290L488 262L510 225L530 195L510 185L522 120L516 60L520 12M365 50L370 95L415 145L440 175L455 190L468 210L475 232L490 250L488 262
    M492 315L505 325L520 330L497 380L460 385L455 398L442 412L415 402L402 410L398 440L390 452L375 462L375 475L370 485M520 330L530 324L540 332L555 335L570 345L580 370L592 410L597 450L595 490L588 522L570 515L565 505L555 500L530 495L500 495L455 503L405 520
    M560 340L575 338L580 322L590 328L600 320L615 325L628 316L635 330L660 352L625 405L610 450L595 490M530 195L540 188L560 192L600 188L672 190L672 150L680 110L672 92M672 190L690 235L708 280L723 295L660 352
    M723 295L780 262L820 232L850 217L845 180L830 160L820 135L800 112L785 108L765 115L750 103L720 97L672 92M830 160L850 162L865 145`,
    bars: [[217, 220, 74], [404, 226, 60], [605, 262, 60], [354, 350, 85], [500, 444, 90], [618, 371, 66, -45], [604, 358, 34, -45]],
  },
];

type LampProps = { x: number; y: number; k: number; glow: string; outline: string };
const Lamp = ({ x, y, k, glow, outline }: LampProps) => (
  <g transform={`translate(${x} ${y}) scale(${k})`}>
    <circle r="101" fill={`url(#${glow})`} />
    <path d="M-14 94C-16 58-54 42-54 0A54 54 0 0 1 54 0C54 42 16 58 14 94Z" fill="#222830" stroke={outline} strokeWidth="12" />
    <path d="M15-37Q40-26 44 4" stroke={outline} strokeWidth="7" fill="none" />
    <path d="M-23 107H23V121H-23ZM-15 124H16V136H-15ZM-7 138H7V151H-7Z" fill={outline} />
  </g>
);

const CountyMap = () => (
  <Drawing viewBox="436 191 1100 580" preserveAspectRatio="xMinYMin slice" role="img" aria-label="County map">
    <defs>
      <radialGradient id="lit">
        <stop offset="0.6" stopColor="#ffffd8" />
        <stop offset="0.85" stopColor="#ffffa0" />
        <stop offset="0.95" stopColor="#ffff28" />
        <stop offset="1" stopColor="#d8d800" />
      </radialGradient>
      <radialGradient id="faded">
        <stop offset="0.8" stopColor="#46494c" />
        <stop offset="0.93" stopColor="#484b35" />
        <stop offset="1" stopColor="#42460f" />
      </radialGradient>
    </defs>
    <Lamp x={711} y={294} k={0.31} glow="faded" outline="#484b53" />
    {sheets.map((s) => (
      <g key={s.at[0]} transform={`translate(${s.at[0]} ${s.at[1]}) scale(${1 / 3})`}>
        <path d={s.lines} fill="none" stroke="#b80d10" strokeWidth="3.300" strokeLinejoin="round" />
        {s.bars.map(([x, y, w, a = 0, fill = '#fff']) => (
          <rect key={`${x}-${y}`} x={x - w / 2} y={y - 8.5} width={w} height={17} fill={fill} transform={`rotate(${a} ${x} ${y})`} />
        ))}
      </g>
    ))}
    <circle cx="1019" cy="463" r="6" fill="#f00000" opacity="0.75" />
    <Lamp x={1384} y={625} k={0.34} glow="lit" outline="#fff" />
    <g fontFamily="Lato, sans-serif" fontStyle="italic" fill="#bcbe0c">
      <text x="1312" y="691" fontSize="13">DESIGNED BY CADBRIGHT</text>
      <text x="646" y="354" fontSize="12" opacity="0.3">DESIGNED BY CADBRIGHT</text>
    </g>
    <path d="M450.500 699V755.500H506M445.500 750.500H456V760.500H445.500ZM452 682L458.500 689V696M465 682L458.500 689M509 740L523 754M523 740L509 754" fill="none" stroke="#c4c6c9" />
    <circle cx="1583" cy="257" r="52" fill="none" stroke="#4a4f57" strokeWidth="12" />
    <text x="1520" y="263" fontFamily="Liberation Sans, sans-serif" fontWeight="700" fontSize="17" fill="#c6c8ca">W</text>
  </Drawing>
);

/* ---------- data ---------- */

const menus: [string, number][] = [
  ['Edit', 46], ['View', 52], ['Insert', 55], ['General', 64], ['Survey', 51], ['Points', 54], ['Surfaces', 67],
  ['Lines/Curves', 91], ['Parcels', 64], ['Grading', 71], ['Alignments', 91], ['Profiles', 67], ['Corridors', 78],
  ['Sections', 72], ['Pipes', 50], ['Annotation', 78], ['Inquiry', 59], ['Window', 72], ['Express', 67],
  ['View', 52], ['Map', 50], ['Help', 40],
];

const tabs: [string, number, ('active' | 'context' | 'cut')?][] = [
  ['Home', 17, 'cut'], ['Insert', 54], ['Annotate', 75, 'active'], ['Modify', 65], ['Analyze', 68], ['View', 50],
  ['Manage', 70], ['Output', 62], ['Survey', 60], ['Rail', 43], ['Transparent', 92], ['InfraWorks', 84],
  ['Collaborate', 91], ['Help', 50], ['Add-ins', 68], ['Express Tools', 100], ['Featured Apps', 108],
  ['Geolocation', 93, 'context'],
];

type Prop = { name: string; value: string; mute?: boolean; sample?: 'color' | 'thin' | 'thick' };
const sections: { title: string; h: number; rows: Prop[] }[] = [
  {
    title: 'General',
    h: 163,
    rows: [
      { name: 'Color', value: 'ByLayer', sample: 'color' },
      { name: 'Layer', value: '0' },
      { name: 'Linetype', value: 'ByLayer', sample: 'thin' },
      { name: 'Linetype scale', value: '1.0000' },
      { name: 'Lineweight', value: 'ByLayer', sample: 'thick' },
      { name: 'Transparency', value: 'ByLayer' },
      { name: 'Thickness', value: '0.0000' },
    ],
  },
  { title: '3D Visualization', h: 24, rows: [{ name: 'Material', value: 'ByLayer' }] },
  {
    title: 'Plot style',
    h: 94,
    rows: [
      { name: 'Plot style', value: 'ByColor', mute: true },
      { name: 'Plot style table', value: 'None' },
      { name: 'Plot table attached to', value: 'Model', mute: true },
      { name: 'Plot table type', value: 'Not available', mute: true },
    ],
  },
  {
    title: 'View',
    h: 117,
    rows: [
      { name: 'Center X', value: '1799979.8518', mute: true },
      { name: 'Center Y', value: '478587.9562', mute: true },
      { name: 'Center Z', value: '0.0000', mute: true },
      { name: 'Height', value: '1675788.5782', mute: true },
      { name: 'Width', value: '3486261.8644', mute: true },
    ],
  },
  {
    title: 'Misc',
    h: 46,
    rows: [
      { name: 'Annotation scale', value: '1" = 40\'' },
      { name: 'UCS icon On', value: 'Yes' },
    ],
  },
];

const statusCells: [number, string, boolean?][] = [
  [53, ''], [73, '⋮⋮⋮'], [115, ''], [24, '∟', true], [24, '□', true], [17, ''], [25, '▱', true], [120, ''],
  [43, '✶'], [25, 'A'], [26, '□'], [78, '○'], [42, '[ ]'], [32, '▱', true],
];

const Title = ({ text, caret, launch }: { text: string; caret?: boolean; launch?: boolean }) => (
  <PanelTitle>
    <TitleText>{text}{caret && <Caret />}</TitleText>
    {launch && <Launcher aria-label={`${text} settings`}>{icons.launcher}</Launcher>}
  </PanelTitle>
);

/* ---------- ribbon panels beyond the shared pieces ---------- */

const TablesBody = styled(PanelBody)`
  justify-content: flex-end;
`;

const TextFields = styled(Stack)`
  margin-left: 5px;
`;

const DimTools = styled.div`
  display: grid;
  grid-template-columns: repeat(3, 19px);
  grid-auto-rows: 24px;
  gap: 4px 8px;
  align-items: center;
  margin-left: 4px;
  padding-right: 3px;
`;

const TablesTitle = styled.div`
  display: flex;
  align-items: center;
  justify-content: flex-end;
  gap: 7px;
  height: 20px;
  padding-right: 5px;
`;

const RibbonPanels = () => (
  <Ribbon>
    <Panel $w={83}>
      <TablesBody>
        <BigButton $w={64}><BigIcon>{icons.tag}</BigIcon>Add<br />Labels</BigButton>
        <DropHolder><Caret s={6} /></DropHolder>
        <BigButton $w={56}><BigIcon>{icons.grid}</BigIcon>Add<br />Tables</BigButton>
        <DropHolder><Caret s={6} /></DropHolder>
      </TablesBody>
      <TablesTitle>Labels &amp; Tables<Caret /></TablesTitle>
    </Panel>

    <Panel $w={335}>
      <PanelBody>
        <BigButton $w={72}><BigIcon>{icons.bigA}</BigIcon>Multiline<br />Text</BigButton>
        <DropHolder><Caret s={6} /></DropHolder>
        <TextFields $grow>
          <Row><Tool name="spell" label="Check spelling" /><Combo label="Text style" value="Standard" /></Row>
          <Row>
            <Tool name="align" label="Align text" />
            <FieldBox>
              <FieldInput aria-label="Find text" placeholder="Find text" />
              <FieldMark>{icons.findA}</FieldMark>
            </FieldBox>
          </Row>
          <Row><Tool name="boxA" label="Text height" /><Combo label="Height" value="0.2000" /></Row>
        </TextFields>
      </PanelBody>
      <Title text="Text" caret launch />
    </Panel>

    <Panel $w={380}>
      <PanelBody>
        <BigButton $w={63}><BigIcon>{icons.dimension}</BigIcon>Dimension</BigButton>
        <TextFields $grow>
          <Row><Combo label="Dimension style" value="Standard" /></Row>
          <Row $gap={4}><Tool name="layers" label="Layer override" /><Combo label="Layer" value="Use Current" swatch="#000" /></Row>
          <Row $gap={8}>
            <Tool name="dimLinear" label="Linear" /><Caret s={6} />
            <Tool name="dimQuick" label="Quick" />
            <Tool name="dimContinue" label="Continue" /><Caret s={6} />
          </Row>
        </TextFields>
        <DimTools>
          <Tool name="dimBreak" label="Break" />
          <Tool name="dimSpace" label="Adjust space" />
          <Tool name="dimJog" label="Jog line" />
          <Tool name="dimCheck" label="Inspect" />
          <Tool name="dimUpdate" label="Update" />
          <Tool name="dimLink" label="Reassociate" />
        </DimTools>
      </PanelBody>
      <Title text="Dimensions" caret launch />
    </Panel>

    <Panel $w={116}>
      <PanelBody>
        <BigButton $w={40}><BigIcon>{icons.centerMark}</BigIcon>Center<br />Mark</BigButton>
        <BigButton $w={70}><BigIcon>{icons.centerLine}</BigIcon>Centerline</BigButton>
      </PanelBody>
      <Title text="Centerlines" />
    </Panel>

    <Panel $w={305}>
      <PanelBody>
        <BigButton $w={69}><BigIcon>{icons.multileader}</BigIcon>Multileader</BigButton>
        <TextFields $grow>
          <Row><Combo label="Leader style" value="Standard" /></Row>
          <Row $gap={10}><Tool name="leadAlign" label="Align" /><Tool name="leadAdd" label="Add leader" /></Row>
          <Row $gap={10}><Tool name="leadCollect" label="Collect" /><Tool name="leadRemove" label="Remove leader" /></Row>
        </TextFields>
      </PanelBody>
      <Title text="Leaders" launch />
    </Panel>

    {([['tables', 'Tables'], ['markup', 'Markup'], ['anno', 'Anno...'], ['labelText', 'Label Text']] as const).map(([icon, label]) => (
      <Collapsed key={label}>
        <BigIcon>{icons[icon]}</BigIcon>
        {label}
        <Spring />
        <Caret />
      </Collapsed>
    ))}
  </Ribbon>
);

const PropertyValue = ({ p }: { p: Prop }) => (
  <ValueFlex>
    {p.sample === 'color' && <ColorBox />}
    {p.sample === 'thin' && <LineSample $weight={1} />}
    {p.sample === 'thick' && <LineSample $weight={7} />}
    {p.value}
  </ValueFlex>
);

const Properties = () => (
  <Palette>
    <PaletteBody>
      <PaletteTitle>PROPERTIES</PaletteTitle>
      <SelectionRow>
        <SelectionField $side>
          <FieldSelect aria-label="Selection" defaultValue="No selection"><option>No selection</option></FieldSelect>
          <FieldMark><Caret s={8} /></FieldMark>
        </SelectionField>
        <Tool name="pickAdd" label="Toggle pick add" />
        <Tool name="pickSelect" label="Select objects" />
        <Tool name="pickQuick" label="Quick select" />
      </SelectionRow>
      <Sections>
        {sections.map((s) => (
          <Section key={s.title}>
            <SectionHead>{s.title}<Caret /></SectionHead>
            <PropTable $h={s.h}>
              <tbody>
                {s.rows.map((p) => (
                  <tr key={p.name}>
                    <PropName scope="row">{p.name}</PropName>
                    <PropValue $mute={p.mute}><PropertyValue p={p} /></PropValue>
                  </tr>
                ))}
              </tbody>
            </PropTable>
          </Section>
        ))}
      </Sections>
    </PaletteBody>
    <SideTabs>
      {['Design', 'Display', 'Extended Data', 'Object Class'].map((t, i) => (
        <SideTab key={t} $active={i === 0}><Upright>{t}</Upright></SideTab>
      ))}
    </SideTabs>
  </Palette>
);

export default function App() {
  return (
    <>
      <GlobalStyle />
      <Shell>
        <MenuBar>
          {menus.map(([t, w], i) => <MenuItem key={i} $w={w}>{t}</MenuItem>)}
        </MenuBar>
        <TabBar>
          {tabs.map(([t, w, k], i) => <RibbonTab key={i} $w={w} $kind={k}>{t}</RibbonTab>)}
          <RibbonToggle aria-label="Minimize ribbon">{icons.minimize}<Caret s={6} /></RibbonToggle>
        </TabBar>
        <RibbonPanels />
        <FileTabs>
          <Slash />
          <FileTab>Start</FileTab>
          <FileTab $active>NC*{icons.tabClose}</FileTab>
          <NewTab aria-label="New drawing">{icons.plus}</NewTab>
          <Slash />
        </FileTabs>
        <Main>
          <Properties />
          <Work>
            <Canvas>
              <CountyMap />
              <ViewLabel>[−][Top][2D Wireframe]</ViewLabel>
            </Canvas>
            <CommandLine>
              <Gutter>
                {icons.dots}
                <Tool name="close" label="Close" />
                <Tool name="wrench" label="Customize" />
              </Gutter>
              <CommandBody>
                <History>
                  <div>Specify first corner: Specify opposite corner:</div>
                  <div>Command: GEOMAP</div>
                  <div>Select map type [openstreetMap/Imagery/Streets/Light/Dark/Aerial/Road/Hybrid/Off] &lt;Aerial&gt;: O</div>
                </History>
                <Prompt>
                  {icons.prompt}
                  <Caret s={9} color="#666" />
                  <PromptInput aria-label="Command" placeholder="Type a command" />
                </Prompt>
              </CommandBody>
            </CommandLine>
          </Work>
        </Main>
        <StatusBar>
          <LayoutTabs>
            <ModelTab />
            <LayoutMarks>
              <Slash />
              {icons.plus}
              <Slash />
            </LayoutMarks>
          </LayoutTabs>
          <StatusGroup>
            {statusCells.map(([w, t, on], i) => <StatusCell key={i} $w={w} $on={on}>{t}</StatusCell>)}
          </StatusGroup>
        </StatusBar>
        <Balloon role="status">
          <BalloonTitle>{icons.info}Plot and Publish Job Complete</BalloonTitle>
          <span>No errors or warnings found</span>
          <BalloonLink href="#details">Click to view plot and publish details...</BalloonLink>
        </Balloon>
      </Shell>
    </>
  );
}
